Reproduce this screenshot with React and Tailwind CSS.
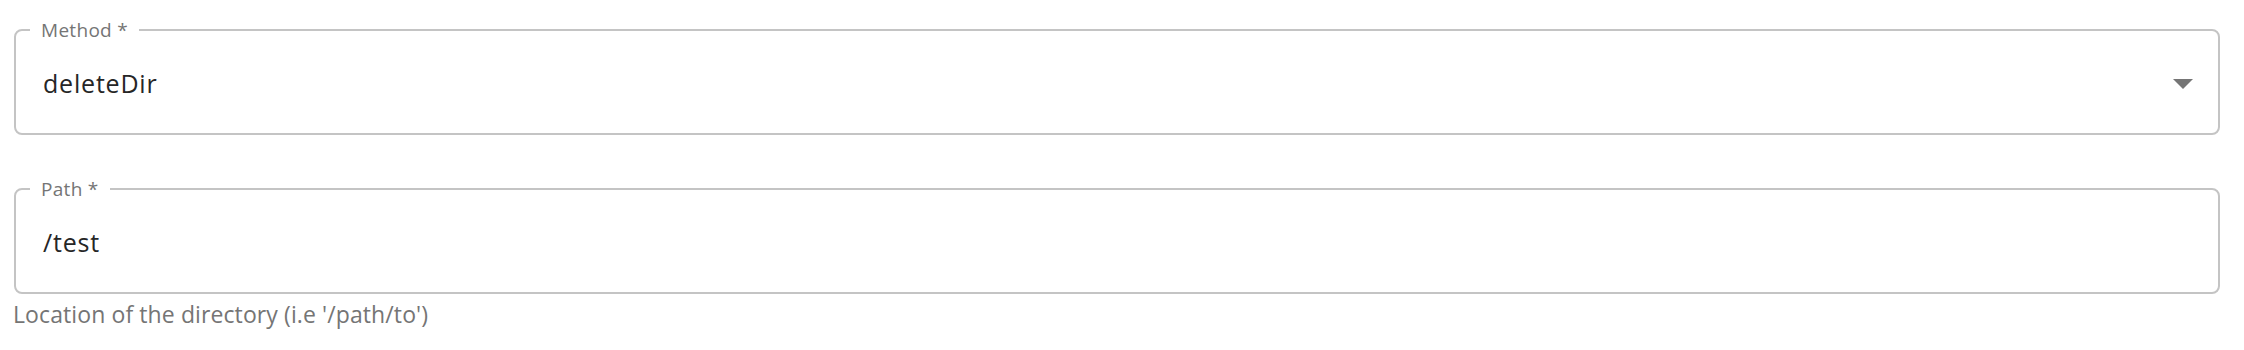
import React from 'react';

const Field = ({ label, value, select, className }) => (
    <fieldset className={`rounded-[8px] border-2 border-[#c4c4c4] ${className || ''}`}>
        <legend className="ml-[14px] px-[11px] text-[19px] leading-[20px] tracking-[0.3px] text-[#757575]">{label}</legend>
        <div className="flex h-[93px] items-center justify-between pb-[6px] pl-[27px] pr-[25px]">
            <span className="text-[25px] tracking-[0.8px] text-[#262626]">{value}</span>
            {select && (
                <svg width="20" height="10" viewBox="0 0 20 10">
                    <path d="M0 0 L20 0 L10 10 Z" fill="#757575" />
                </svg>
            )}
        </div>
    </fieldset>
);

export default function App() {
    return (
        <div className="min-h-[350px] bg-white pl-[14px] pr-[24px] pt-[20px] font-['Open_Sans',sans-serif]">
            <Field label="Method *" value="deleteDir" select />
            <Field label="Path *" value="/test" className="mt-[44px]" />
            <p className="mt-[6px] -ml-px text-[23px] leading-[28px] tracking-[0.1px] text-[#757575]">
                Location of the directory (i.e '/path/to')
            </p>
        </div>
    );
}
